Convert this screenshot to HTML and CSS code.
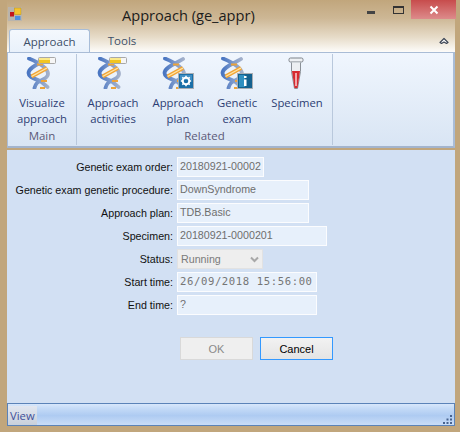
FILE: index.html
```html
<!DOCTYPE html>
<html lang="en">
<head>
<meta charset="utf-8">
<title>Approach (ge_appr)</title>
<link rel="stylesheet" href="styles.css">
</head>
<body>
<svg class="defs" width="0" height="0" aria-hidden="true">
  <defs>
    <linearGradient id="strand" x1="0" y1="0" x2="1" y2="0">
      <stop offset="0" stop-color="#4a76c2"/>
      <stop offset=".55" stop-color="#7f9bcc"/>
      <stop offset="1" stop-color="#a3b0ca"/>
    </linearGradient>
    <symbol id="helix" viewBox="0 0 24 32">
      <path d="M21 2C15 6 2.500 10 2.500 16c0 5 9 6 13 9 2 1.500 4 3.500 6 5" fill="none" stroke="url(#strand)" stroke-width="3.800" stroke-linecap="round"/>
      <path d="M3 1.500C9 4 22 10 22 17c0 5-8 6-11 9-1.500 1.500-2 3-2.500 5" fill="none" stroke="url(#strand)" stroke-width="3.800" stroke-linecap="round"/>
      <path d="M5.500 19.500 21 11" stroke="#f1a436" stroke-width="4"/>
      <path d="M5.500 19.500 21 11" stroke="#ffe6a8" stroke-width="1.400"/>
      <path d="M11 7.500h6M15 24h6M14 31h5" stroke="#eda33a" stroke-width="2"/>
    </symbol>
    <symbol id="bar" viewBox="0 0 18 7">
      <rect x=".5" y=".5" width="17" height="6" rx="1" fill="#f6f6f6" stroke="#a8a8a8"/>
      <rect x="1" y="1" width="11" height="5" fill="#f2c521"/>
      <rect x="1" y="1" width="11" height="2" fill="#fbe98a"/>
    </symbol>
  </defs>
</svg>
<div class="window">
  <header class="titlebar">
    <div class="title-row">
      <svg class="app-icon" width="14" height="14" viewBox="0 0 14 14">
        <rect width="14" height="14" fill="#b9b4ad"/>
        <rect x="6.500" y="1" width="6.500" height="6.500" fill="#f4c32d" stroke="#c79a18" stroke-width=".6"/>
        <rect x="2" y="5" width="4" height="4.500" fill="#c3161c"/>
        <rect x="7" y="9" width="5.500" height="4" fill="#4d8fe0"/>
      </svg>
      <h1 class="title">Approach (ge_appr)</h1>
      <div class="win-controls">
        <span class="win-min"></span>
        <span class="win-max"></span>
        <span class="win-close">
          <svg width="10" height="10" viewBox="0 0 10 10"><path d="M1.500 1.500l7 7M8.500 1.500l-7 7" stroke="#fff" stroke-width="2"/></svg>
        </span>
      </div>
    </div>
    <div class="tab-row">
      <span class="tab tab-active">Approach</span>
      <span class="tab">Tools</span>
      <svg class="collapse" width="10" height="8" viewBox="0 0 10 8"><path d="M1 5.500 5 1.500l4 4-1.500 1L5 5 2.500 6.500z" fill="#fff" stroke="#3d4656" stroke-width="1.200" stroke-linejoin="round"/></svg>
    </div>
  </header>

  <section class="ribbon">
    <div class="group group-main">
      <div class="group-items">
        <div class="rb rb-main">
          <span class="ico"><svg class="helix" width="24" height="32"><use href="#helix"/></svg><svg class="badge-bar" width="18" height="7"><use href="#bar"/></svg></span>
          <span class="rb-text">Visualize<br>approach</span>
        </div>
      </div>
      <div class="group-label">Main</div>
    </div>
    <div class="group group-related">
      <div class="group-items">
        <div class="rb rb-act">
          <span class="ico"><svg class="helix" width="24" height="32"><use href="#helix"/></svg><svg class="badge-bar" width="18" height="7"><use href="#bar"/></svg></span>
          <span class="rb-text">Approach<br>activities</span>
        </div>
        <div class="rb rb-plan">
          <span class="ico"><svg class="helix" width="24" height="32"><use href="#helix"/></svg>
            <svg class="badge" width="16" height="16" viewBox="0 0 16 16">
              <rect x=".5" y=".5" width="15" height="15" fill="#1a6fa8" stroke="#a9adb3"/>
              <rect x="2" y="2" width="12" height="5" fill="#3f8fc4"/>
              <circle cx="8" cy="8" r="3.300" fill="none" stroke="#fff" stroke-width="2"/>
              <path d="M8 2.800v2M8 11.200v2M2.800 8h2M11.200 8h2M4.300 4.300l1.400 1.400M10.300 10.300l1.400 1.400M11.700 4.300l-1.400 1.400M5.700 10.300l-1.400 1.400" stroke="#fff" stroke-width="1.500"/>
            </svg></span>
          <span class="rb-text">Approach<br>plan</span>
        </div>
        <div class="rb rb-exam">
          <span class="ico"><svg class="helix" width="24" height="32"><use href="#helix"/></svg>
            <svg class="badge" width="16" height="16" viewBox="0 0 16 16">
              <rect x=".5" y=".5" width="15" height="15" fill="#14618f" stroke="#a9adb3"/>
              <rect x="2" y="2" width="6" height="12" fill="#2f8fc0"/>
              <path d="M7 3h2.500v2H7zM7 6.500h2.500V13H7z" fill="#fff"/>
            </svg></span>
          <span class="rb-text">Genetic<br>exam</span>
        </div>
        <div class="rb rb-spec">
          <span class="ico">
            <svg class="tube" width="16" height="32" viewBox="0 0 16 32">
              <rect x="1" y="1" width="14" height="4" rx="1.500" fill="#eef1f4" stroke="#7d838a"/>
              <path d="M3.500 5.500v9l3 17h3l3-17v-9" fill="#eceff2" stroke="#8a9097"/>
              <path d="M4 14h8l-2.500 17h-3z" fill="#d62a30"/>
              <path d="M7 16h2v13H7z" fill="#f2a6a8"/>
            </svg>
          </span>
          <span class="rb-text">Specimen</span>
        </div>
      </div>
      <div class="group-label">Related</div>
    </div>
    <div class="group group-empty"></div>
  </section>

  <main class="form">
    <div class="row"><label class="lbl">Genetic exam order:</label><div class="field w-order">20180921-00002</div></div>
    <div class="row"><label class="lbl">Genetic exam genetic procedure:</label><div class="field w-proc">DownSyndrome</div></div>
    <div class="row"><label class="lbl">Approach plan:</label><div class="field w-proc">TDB.Basic</div></div>
    <div class="row"><label class="lbl">Specimen:</label><div class="field w-spec">20180921-0000201</div></div>
    <div class="row"><label class="lbl">Status:</label>
      <div class="select">Running
        <svg class="chev" width="9" height="7" viewBox="0 0 9 7"><path d="M1 1.500l3.500 3.500L8 1.500" fill="none" stroke="#a8a8a8" stroke-width="2"/></svg>
      </div></div>
    <div class="row"><label class="lbl">Start time:</label><div class="field w-time mono">26/09/2018 15:56:00</div></div>
    <div class="row"><label class="lbl">End time:</label><div class="field w-time">?</div></div>
    <div class="actions">
      <button class="btn btn-disabled" type="button" disabled>OK</button>
      <button class="btn btn-default" type="button">Cancel</button>
    </div>
  </main>

  <footer class="status">
    <span class="status-view">View</span>
    <svg class="grip" width="10" height="10" viewBox="0 0 10 10"><path d="M7 1h2v2H7zM3.500 4.500h2v2h-2zM7 4.500h2v2H7zM0 8h2v2H0zM3.500 8h2v2h-2zM7 8h2v2H7z" fill="#46628f"/></svg>
  </footer>
</div>
</body>
</html>
```
FILE: styles.css
```css
* { box-sizing: border-box; }
html, body { margin: 0; padding: 0; }
.defs { position: absolute; }
.window {
  width: 460px; height: 432px; background: #c1a67c;
  padding: 0 5px 6px 7px; display: flex; flex-direction: column;
  font-family: "Open Sans", "Noto Sans", sans-serif; overflow: hidden;
}
.titlebar {
  height: 52px; flex: none;
  background: linear-gradient(#c1a67c 0, #cdb795 35%, #e7dcc9 72%, #fdfcfa 100%);
}
.title-row { height: 29px; display: flex; position: relative; }
.app-icon { margin: 7px 0 0 1px; }
.title { margin: 4px 0 0 100px; font-size: 14.600px; font-weight: 400; color: #1c1c1c; line-height: 22px; }
.win-controls { position: absolute; right: 0; top: 0; display: flex; }
.win-min { width: 8px; height: 3px; background: #444; margin: 11px 18px 0 0; }
.win-max { width: 11px; height: 8px; border: 1px solid #333; border-top-width: 2px; margin: 6px 7px 0 0; }
.win-close {
  width: 45px; height: 19px; background: linear-gradient(#c74c4c, #dd8b8b);
  display: flex; align-items: center; justify-content: center; margin-right: -1px;
}
.tab-row { height: 23px; display: flex; position: relative; align-items: flex-end; padding-left: 2px; }
.tab { width: 81px; height: 23px; text-align: center; font-size: 11.500px; line-height: 24px; color: #3d4f68; }
.tab + .tab { width: 64px; }
.tab-active {
  background: linear-gradient(#f4f8fd, #e9f1fb); border: 1px solid #a8bdd8; border-bottom: 0;
  border-radius: 3px 3px 0 0;
}
.collapse { position: absolute; right: 6px; top: 8px; }

.ribbon {
  height: 96px; flex: none; display: flex;
  background: linear-gradient(#f0f6fe, #d9e5f4);
  border: 1px solid #a9bcd6; border-bottom: 2px solid #a3b4cd; border-right-width: 2px;
  color: #2f3f75;
}
.group { display: flex; flex-direction: column; padding-top: 1px; border-right: 1px solid #b9c8dc; margin: 1px 0; }
.group-main { width: 69px; }
.group-related { flex: 0 0 256px; }
.group-empty { flex: 1; border: 0; }
.group-items { flex: 1; display: flex; }
.group-label { height: 18px; text-align: center; font-size: 11.500px; line-height: 17px; color: #5c5a78; }
.rb { display: flex; flex-direction: column; align-items: center; font-size: 11.300px; line-height: 16px; text-align: center; }
.rb-main { width: 68px; }
.rb-act { width: 72px; }
.rb-plan { width: 58px; }
.rb-exam { width: 60px; }
.rb-spec { width: 60px; }
.rb-text { margin-top: 3px; color: #2d3d73; white-space: nowrap; }
.ico { position: relative; width: 44px; height: 37px; display: block; }
.helix { position: absolute; left: 6px; top: 2px; }
.badge-bar { position: absolute; left: 18px; top: 2px; }
.badge { position: absolute; left: 22px; top: 18px; }
.rb-exam .helix { left: 5px; }
.tube { position: absolute; left: 13px; top: 2px; }

.form {
  flex: 1; background: #d2e0f3; margin-top: 2px; padding-top: 7px;
  font-family: "Liberation Sans", Arial, sans-serif; font-size: 10.700px; color: #111;
}
.row { display: flex; align-items: center; height: 20px; margin-bottom: 3px; }
.lbl { width: 166px; text-align: right; margin-right: 4px; white-space: nowrap; }
.field {
  height: 20px; background: #e7f0fb; border: 1px solid #fbfcfe; color: #6e6e6e;
  padding: 0 2px; line-height: 16px; white-space: nowrap; overflow: hidden;
}
.w-order { width: 87px; }
.w-proc { width: 132px; }
.w-spec { width: 150px; }
.w-time { width: 140px; }
.mono { font-family: "DejaVu Sans Mono", monospace; font-size: 10.600px; letter-spacing: .6px; color: #757575; }
.select {
  width: 86px; height: 20px; background: #eeeeee; color: #7a7a7a; border: 1px solid #e2e2e2;
  line-height: 18px; padding-left: 3px; position: relative;
}
.chev { position: absolute; right: 3px; top: 6px; }
.actions { display: flex; gap: 7px; padding-left: 173px; margin-top: 22px; }
.btn { width: 73px; height: 23px; font: 11px "Liberation Sans", Arial, sans-serif; padding: 0; border-radius: 0; }
.btn-disabled { background: #efefef; border: 1px solid #d9d9d9; color: #8a8a8a; }
.btn-default { background: linear-gradient(#f2f2f2, #e4e4e4); border: 1px solid #3399ff; color: #000; }

.status {
  height: 23px; flex: none; display: flex; position: relative;
  border: 1px solid #5b83b8;
  background: linear-gradient(#d8e7fb 0, #c5dbf7 20%, #aecbf2 55%, #c9ddf8 100%);
}
.status-view {
  width: 29px; height: 19px; margin-top: 2px; padding-left: 2px; font-size: 11.300px; line-height: 19px; color: #3f4f9a;
  background: linear-gradient(#e2e7f0, #c8d0dc);
}
.grip { position: absolute; right: 1px; bottom: 1px; }
```
